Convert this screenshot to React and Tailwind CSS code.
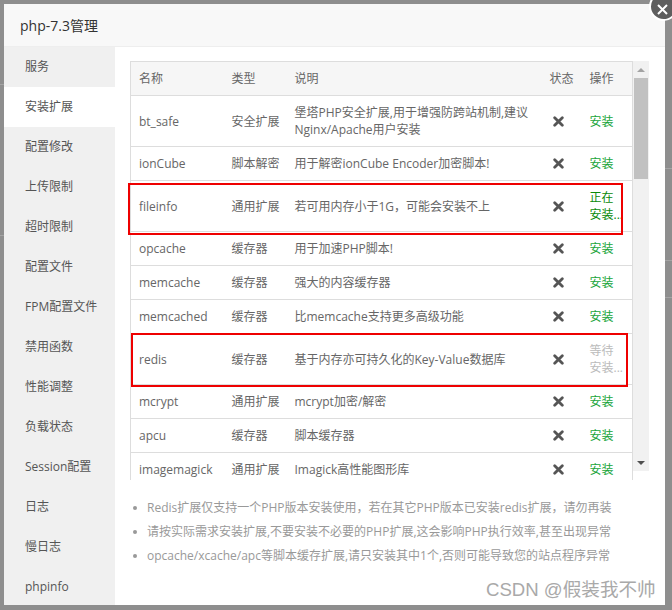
import { Fragment } from "react";

const FONT = { fontFamily: '"Open Sans", "Noto Sans CJK SC", sans-serif' };

const menu = [
  "服务",
  "安装扩展",
  "配置修改",
  "上传限制",
  "超时限制",
  "配置文件",
  "FPM配置文件",
  "禁用函数",
  "性能调整",
  "负载状态",
  "Session配置",
  "日志",
  "慢日志",
  "phpinfo",
];

const rows = [
  { name: "bt_safe", type: "安全扩展", desc: ["堡塔PHP安全扩展,用于增强防跨站机制,建议", "Nginx/Apache用户安装"], state: "install" },
  { name: "ionCube", type: "脚本解密", desc: ["用于解密ionCube Encoder加密脚本!"], state: "install" },
  { name: "fileinfo", type: "通用扩展", desc: ["若可用内存小于1G，可能会安装不上"], state: "running" },
  { name: "opcache", type: "缓存器", desc: ["用于加速PHP脚本!"], state: "install" },
  { name: "memcache", type: "缓存器", desc: ["强大的内容缓存器"], state: "install" },
  { name: "memcached", type: "缓存器", desc: ["比memcache支持更多高级功能"], state: "install" },
  { name: "redis", type: "缓存器", desc: ["基于内存亦可持久化的Key-Value数据库"], state: "waiting" },
  { name: "mcrypt", type: "通用扩展", desc: ["mcrypt加密/解密"], state: "install" },
  { name: "apcu", type: "缓存器", desc: ["脚本缓存器"], state: "install" },
  { name: "imagemagick", type: "通用扩展", desc: ["Imagick高性能图形库"], state: "install" },
];

const notes = [
  "Redis扩展仅支持一个PHP版本安装使用，若在其它PHP版本已安装redis扩展，请勿再装",
  "请按实际需求安装扩展,不要安装不必要的PHP扩展,这会影响PHP执行效率,甚至出现异常",
  "opcache/xcache/apc等脚本缓存扩展,请只安装其中1个,否则可能导致您的站点程序异常",
];

function Cross() {
  return (
    <svg width="11" height="11" viewBox="0 0 11 11" className="block">
      <path d="M1.7 1.7 L9.3 9.3 M9.3 1.7 L1.7 9.3" stroke="#555" strokeWidth="2.8" strokeLinecap="round" />
    </svg>
  );
}

function Op({ state }) {
  if (state === "running")
    return (
      <span className="block leading-[17px] text-[#0a8a0a]">
        正在
        <br />
        安装...
      </span>
    );
  if (state === "waiting")
    return (
      <span className="block leading-[17px] text-[#bbbbbb]">
        等待
        <br />
        安装...
      </span>
    );
  return <span className="text-[#20a53a]">安装</span>;
}

export default function App() {
  return (
    <div className="relative h-[610px] w-[672px] overflow-hidden bg-[#8e8e8e]" style={FONT}>
      {/* page behind the overlay */}
      <div className="absolute right-0 top-[168px] h-px w-[7px] bg-[#a4a4a4]" />
      <div className="absolute right-0 top-[260px] h-px w-[7px] bg-[#a4a4a4]" />
      <div className="absolute right-0 top-[297px] h-px w-[7px] bg-[#a4a4a4]" />
      <div className="absolute left-0 top-[84px] h-px w-[4px] bg-[#a4a4a4]" />
      <div className="absolute left-0 top-[235px] h-px w-[4px] bg-[#a4a4a4]" />

      <div className="ml-[4px] mt-[4px] flex h-[601px] w-[661px] flex-col bg-white">
        <div className="flex h-[43px] shrink-0 items-center border-b border-[#eeeeee] bg-[#f8f8f8] pl-[16px] text-[14px] text-[#333]">
          php-7.3管理
        </div>

        <div className="flex min-h-0 flex-1">
          <ul className="w-[111px] shrink-0 bg-[#f0f0f0]">
            {menu.map((m, i) => (
              <li
                key={m}
                className={`flex h-[40px] items-center pl-[21px] text-[12px] text-[#555] ${i === 1 ? "bg-white" : ""}`}
              >
                {m}
              </li>
            ))}
          </ul>

          <div className="flex-1 pl-[15px] pt-[14px]">
            <div className="flex h-[419px] w-[519px]">
              <div className="h-full w-[503px] overflow-hidden">
                <table className="w-full table-fixed border-collapse border border-[#dddddd] text-[12px] leading-[17px] text-[#666]">
                  <colgroup>
                    <col className="w-[93px]" />
                    <col className="w-[63px]" />
                    <col className="w-[255px]" />
                    <col className="w-[40px]" />
                    <col />
                  </colgroup>
                  <thead>
                    <tr className="h-[34px] bg-[#f6f6f6] text-left">
                      <th className="pl-[8px] font-normal">名称</th>
                      <th className="pl-[8px] font-normal">类型</th>
                      <th className="pl-[8px] font-normal">说明</th>
                      <th className="pl-[8px] font-normal">状态</th>
                      <th className="pl-[8px] font-normal">操作</th>
                    </tr>
                  </thead>
                  <tbody>
                    {rows.map((r) => (
                      <tr key={r.name} className="border-t border-[#dddddd]">
                        <td className="py-[8px] pl-[8px]">{r.name}</td>
                        <td className="py-[8px] pl-[8px]">{r.type}</td>
                        <td className="py-[8px] pl-[8px]">
                          {r.desc.map((d, i) => (
                            <Fragment key={d}>
                              {i > 0 && <br />}
                              {d}
                            </Fragment>
                          ))}
                        </td>
                        <td className="py-[8px] pl-[11px]">
                          <Cross />
                        </td>
                        <td className="py-[8px] pl-[8px]">
                          <Op state={r.state} />
                        </td>
                      </tr>
                    ))}
                  </tbody>
                </table>
              </div>

              <div className="flex h-[410px] w-[16px] flex-col bg-[#f1f1f1]">
                <div className="flex h-[17px] items-center justify-center">
                  <div className="h-0 w-0 border-x-[4px] border-b-[4px] border-x-transparent border-b-[#a3a3a3]" />
                </div>
                <div className="mx-[1px] h-[101px] bg-[#c1c1c1]" />
                <div className="flex-1" />
                <div className="flex h-[17px] items-center justify-center">
                  <div className="h-0 w-0 border-x-[4px] border-t-[4px] border-x-transparent border-t-[#505050]" />
                </div>
              </div>
            </div>

            <ul className="mt-[16px] flex flex-col text-[12px] text-[#999]">
              {notes.map((n) => (
                <li key={n} className="flex h-[24px] items-center">
                  <span className="ml-[3px] mr-[10px] h-[4px] w-[4px] rounded-full bg-[#999]" />
                  {n}
                </li>
              ))}
            </ul>
          </div>
        </div>
      </div>

      {/* close button */}
      <div className="absolute left-[649px] top-[-8px] flex h-[29px] w-[29px] items-center justify-center rounded-full border-[2px] border-white bg-[#5e5e5e]">
        <svg width="13" height="13" viewBox="0 0 13 13" className="mt-[6px] mr-[3px]">
          <path d="M2 2 L11 11 M11 2 L2 11" stroke="white" strokeWidth="2" />
        </svg>
      </div>

      {/* annotation boxes */}
      <div className="absolute left-[128px] top-[183px] h-[52px] w-[495px] border-[2px] border-[#ee0000]" />
      <div className="absolute left-[131px] top-[333px] h-[54px] w-[497px] border-[2px] border-[#ee0000]" />

      <div className="absolute left-[486px] top-[576px] text-[18.6px] text-[#a9a9a9]" style={{ fontFamily: '"Liberation Sans", "Noto Sans CJK SC", sans-serif' }}>
        CSDN @假装我不帅
      </div>
    </div>
  );
}
